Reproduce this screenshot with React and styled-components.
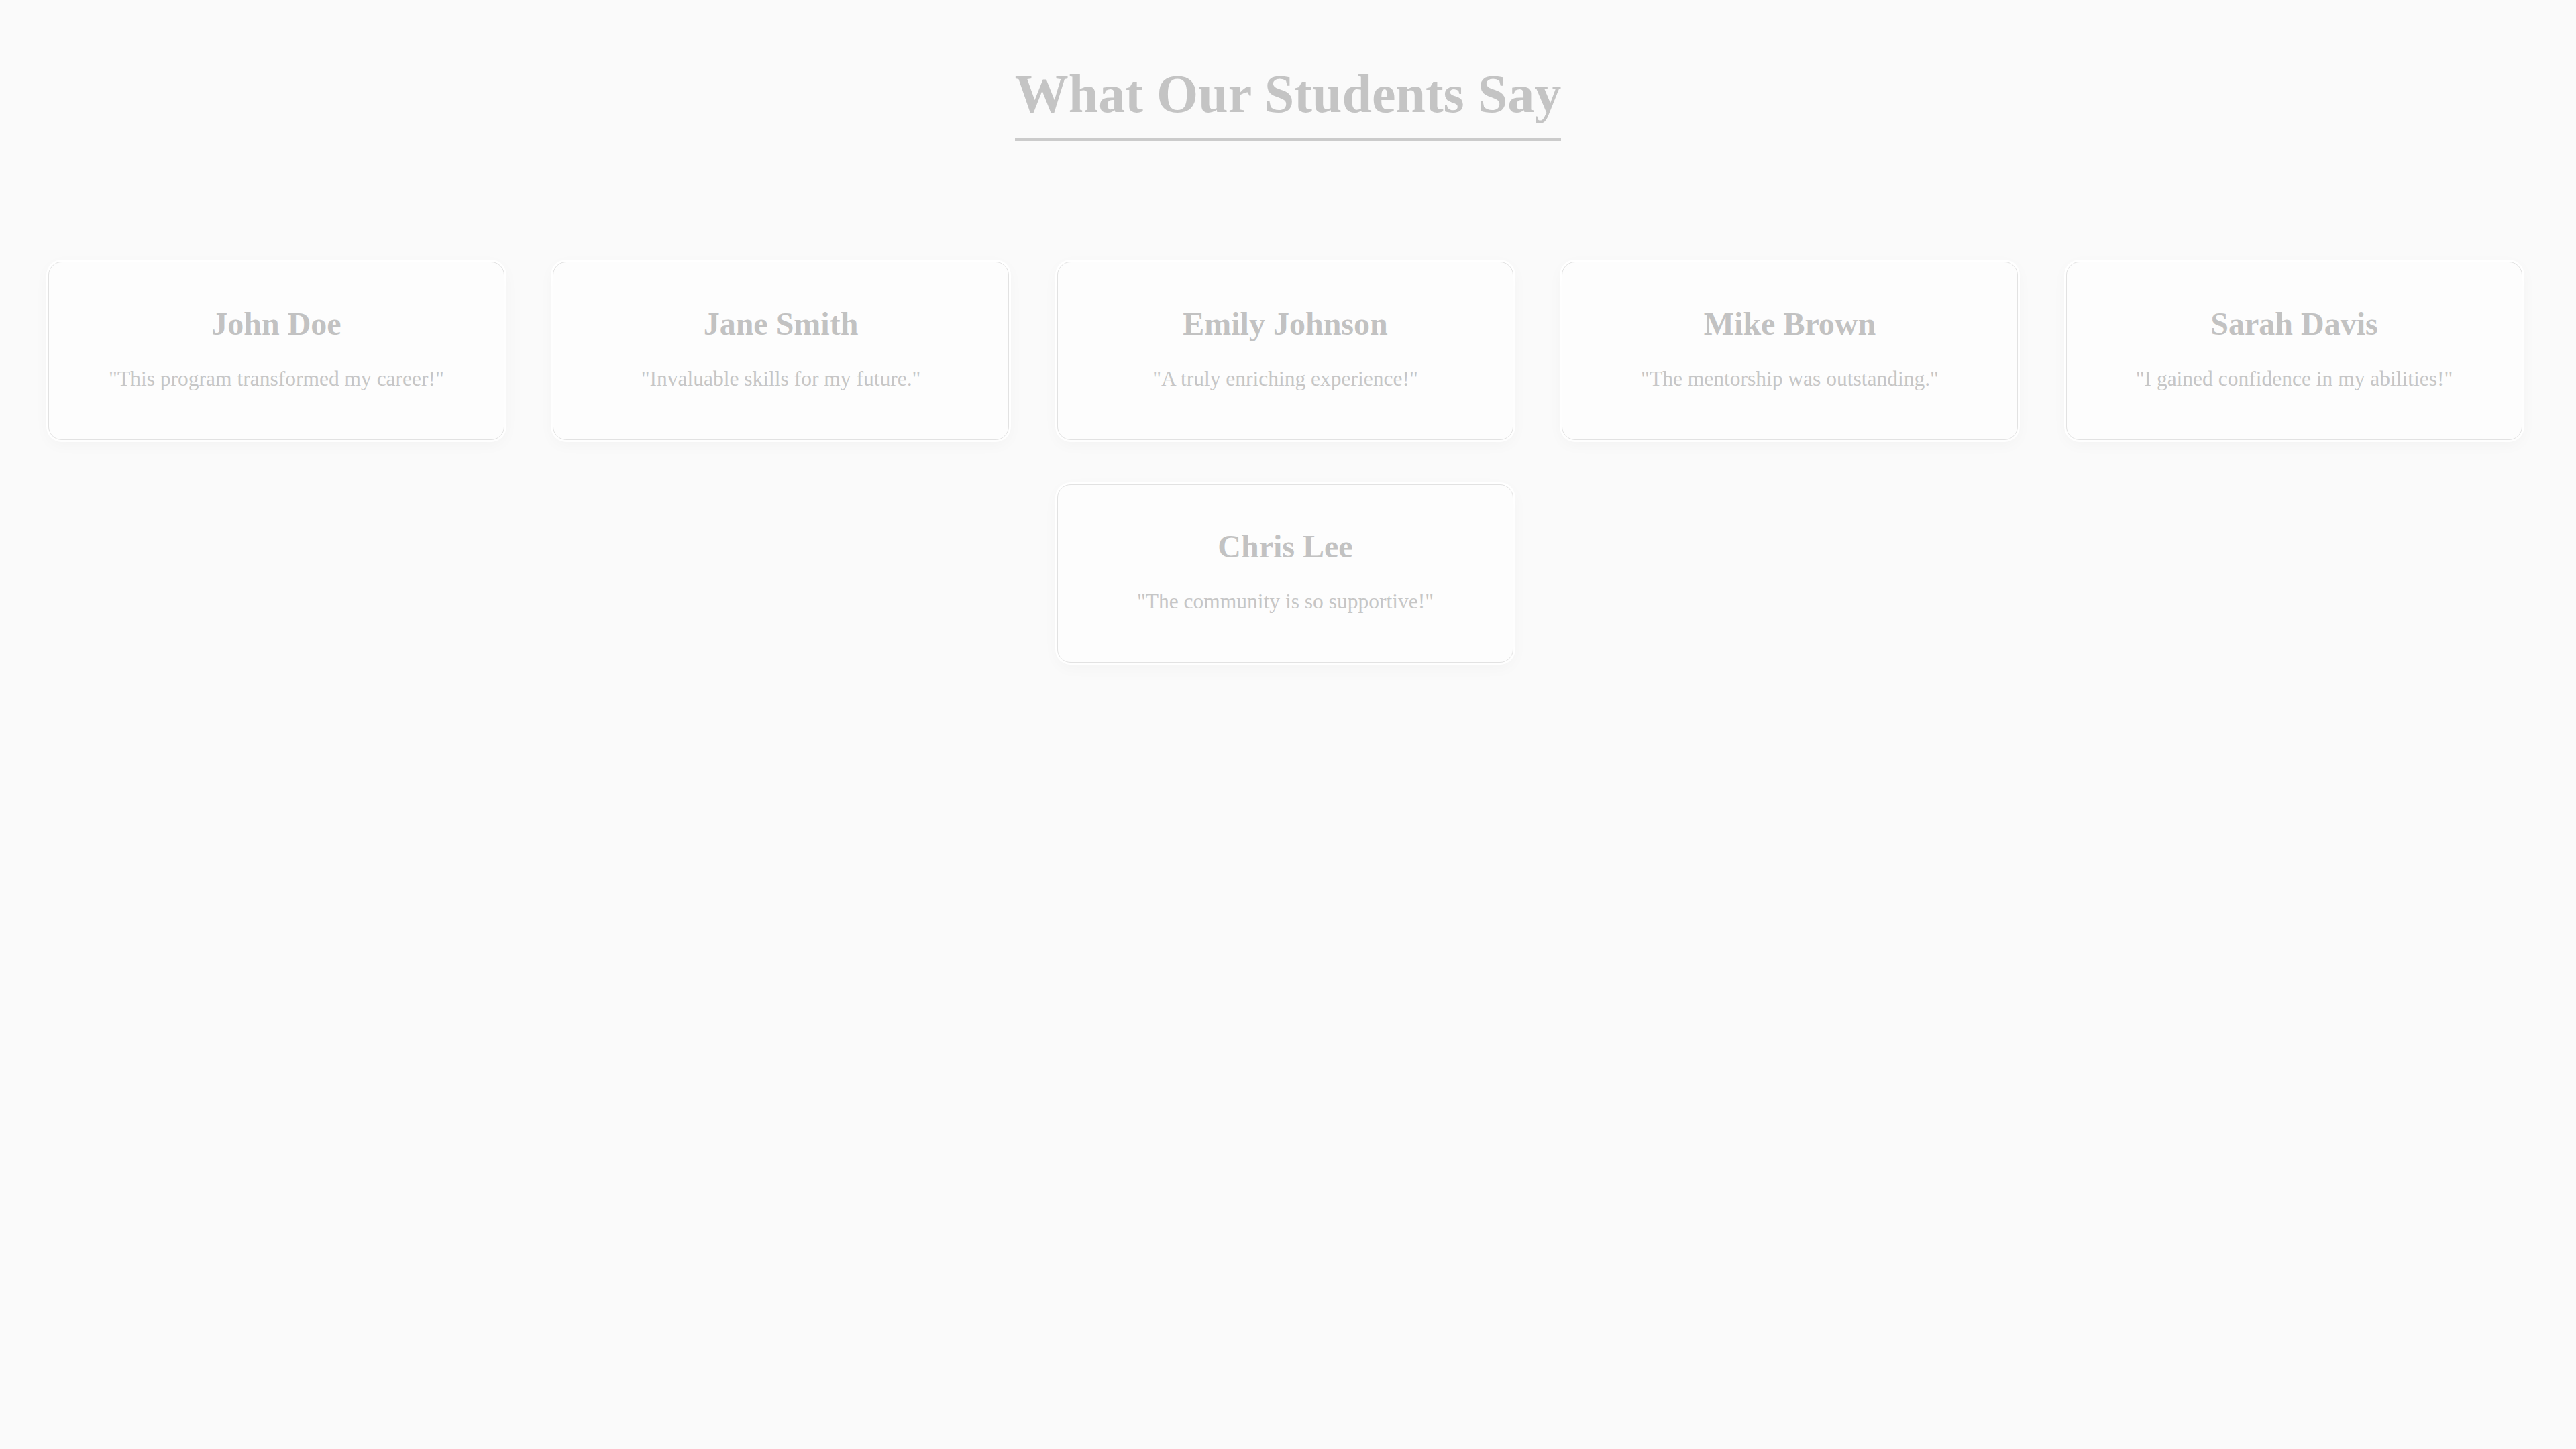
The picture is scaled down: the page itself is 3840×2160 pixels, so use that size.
import React from "react";
import styled, { createGlobalStyle } from "styled-components";

const GlobalStyle = createGlobalStyle`
  html, body {
    margin: 0;
    padding: 0;
    background: #fafafa;
  }
  body {
    font-family: "Liberation Serif", "Times New Roman", serif;
  }
`;

const Page = styled.main`
  min-height: 100vh;
  background: #fafafa;
  display: flex;
  flex-direction: column;
  align-items: center;
  padding: 94px 0 80px;
  box-sizing: border-box;
`;

const Title = styled.h1`
  margin: 0;
  font-family: "Liberation Serif", "Times New Roman", serif;
  font-size: 80px;
  line-height: 92px;
  font-weight: 700;
  color: #c4c4c4;
  padding-bottom: 20px;
  border-bottom: 4px solid #cbcbcb;
  text-align: center;
`;

const Grid = styled.section`
  margin-top: 180px;
  width: 100%;
  display: flex;
  flex-wrap: wrap;
  justify-content: center;
  column-gap: 72px;
  row-gap: 66px;
  padding: 0 74px 0 66px;
  box-sizing: border-box;
`;

const Card = styled.article`
  width: 680px;
  box-sizing: border-box;
  background: #fdfdfd;
  border: 1px solid #e2e2e2;
  border-radius: 20px;
  box-shadow: 0 0 0 3px rgba(255, 255, 255, 0.9),
    0 6px 24px rgba(0, 0, 0, 0.035);
  padding: 64px 32px 72px;
  display: flex;
  flex-direction: column;
  align-items: center;
  text-align: center;
`;

const Name = styled.h3`
  margin: 0 0 36px;
  font-family: "Liberation Serif", "Times New Roman", serif;
  font-size: 48px;
  line-height: 56px;
  font-weight: 700;
  color: #c2c2c2;
`;

const Quote = styled.p`
  margin: 0;
  font-family: "Liberation Serif", "Times New Roman", serif;
  font-size: 31.5px;
  line-height: 36px;
  font-weight: 400;
  color: #c6c6c6;
`;

const testimonials = [
  { name: "John Doe", quote: "This program transformed my career!" },
  { name: "Jane Smith", quote: "Invaluable skills for my future." },
  { name: "Emily Johnson", quote: "A truly enriching experience!" },
  { name: "Mike Brown", quote: "The mentorship was outstanding." },
  { name: "Sarah Davis", quote: "I gained confidence in my abilities!" },
  { name: "Chris Lee", quote: "The community is so supportive!" },
];

export default function App() {
  return (
    <>
      <GlobalStyle />
      <Page>
        <Title>What Our Students Say</Title>
        <Grid>
          {testimonials.map((t) => (
            <Card key={t.name}>
              <Name>{t.name}</Name>
              <Quote>"{t.quote}"</Quote>
            </Card>
          ))}
        </Grid>
      </Page>
    </>
  );
}
